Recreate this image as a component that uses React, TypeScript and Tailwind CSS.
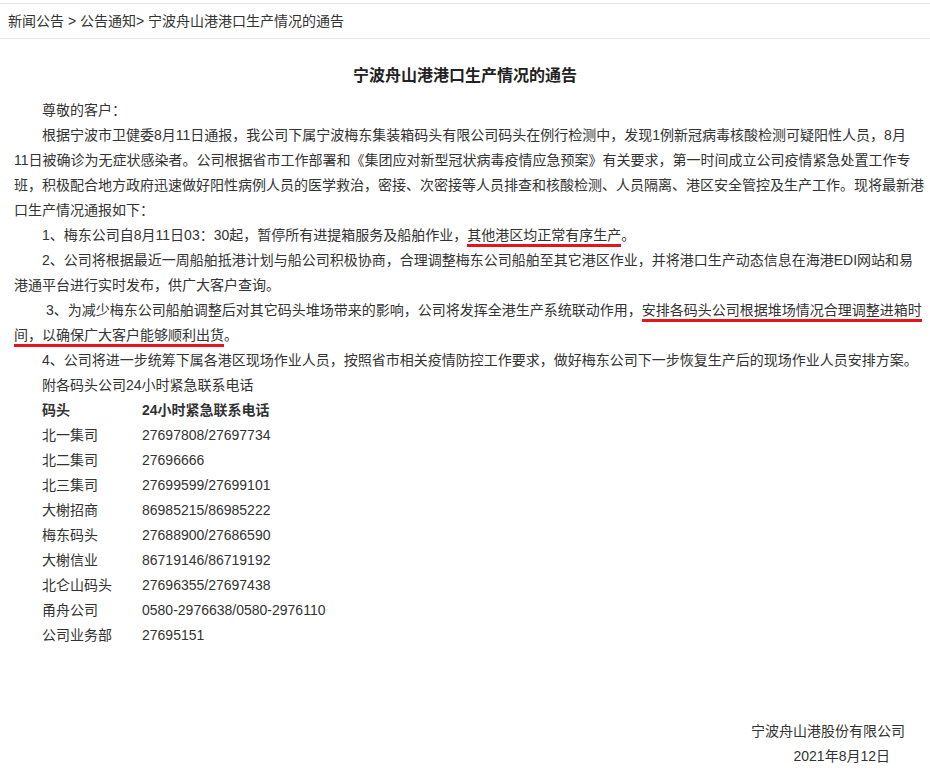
export default function App() {
  const rows: [string, string][] = [
    ["北一集司", "27697808/27697734"],
    ["北二集司", "27696666"],
    ["北三集司", "27699599/27699101"],
    ["大榭招商", "86985215/86985222"],
    ["梅东码头", "27688900/27686590"],
    ["大榭信业", "86719146/86719192"],
    ["北仑山码头", "27696355/27697438"],
    ["甬舟公司", "0580-2976638/0580-2976110"],
    ["公司业务部", "27695151"],
  ];
  const U = ({ children }: { children: React.ReactNode }) => (
    <span className="border-b-[3px] border-[#e8141b] pb-[1px]">{children}</span>
  );
  return (
    <div className="w-[930px] h-[772px] bg-white text-[#333] text-[14px] overflow-hidden" style={{ fontFamily: '"Liberation Sans", "Noto Sans CJK SC", sans-serif' }}>
      <div className="mt-[3px] border-t border-b border-[#e6e6e6] h-[36px] flex items-center pl-[8px] text-[14px] text-[#333]">
        新闻公告 &gt; 公告通知&gt; 宁波舟山港港口生产情况的通告
      </div>
      <div className="text-center font-bold text-[16px] text-[#222] mt-[24px] leading-[26px]">宁波舟山港港口生产情况的通告</div>
      <div className="pl-[14px] pr-[12px] mt-[9px] leading-[25px] whitespace-nowrap">
        <div className="pl-[28px]">尊敬的客户：</div>
        <div className="indent-[28px]">根据宁波市卫健委8月11日通报，我公司下属宁波梅东集装箱码头有限公司码头在例行检测中，发现1例新冠病毒核酸检测可疑阳性人员，8月<br />11日被确诊为无症状感染者。公司根据省市工作部署和《集团应对新型冠状病毒疫情应急预案》有关要求，第一时间成立公司疫情紧急处置工作专<br />班，积极配合地方政府迅速做好阳性病例人员的医学救治，密接、次密接等人员排查和核酸检测、人员隔离、港区安全管控及生产工作。现将最新港<br />口生产情况通报如下：</div>
        <div className="pl-[28px]">1、梅东公司自8月11日03：30起，暂停所有进提箱服务及船舶作业，<U>其他港区均正常有序生产</U>。</div>
        <div className="indent-[28px]">2、公司将根据最近一周船舶抵港计划与船公司积极协商，合理调整梅东公司船舶至其它港区作业，并将港口生产动态信息在海港EDI网站和易<br />港通平台进行实时发布，供广大客户查询。</div>
        <div className="indent-[32px]">3、为减少梅东公司船舶调整后对其它码头堆场带来的影响，公司将发挥全港生产系统联动作用，<U>安排各码头公司根据堆场情况合理调整进箱时</U><br /><U>间，以确保广大客户能够顺利出货</U>。</div>
        <div className="pl-[28px]">4、公司将进一步统筹下属各港区现场作业人员，按照省市相关疫情防控工作要求，做好梅东公司下一步恢复生产后的现场作业人员安排方案。</div>
        <div className="pl-[28px]">附各码头公司24小时紧急联系电话</div>
        <div className="pl-[28px] flex font-bold"><span className="w-[100px]">码头</span><span>24小时紧急联系电话</span></div>
        {rows.map(([a, b]) => (
          <div key={a} className="pl-[28px] flex"><span className="w-[100px]">{a}</span><span>{b}</span></div>
        ))}
      </div>
      <div className="mt-[71px] pr-[25px] text-right leading-[25px]">
        <div>宁波舟山港股份有限公司</div>
        <div className="pr-[15px]">2021年8月12日</div>
      </div>
    </div>
  );
}
